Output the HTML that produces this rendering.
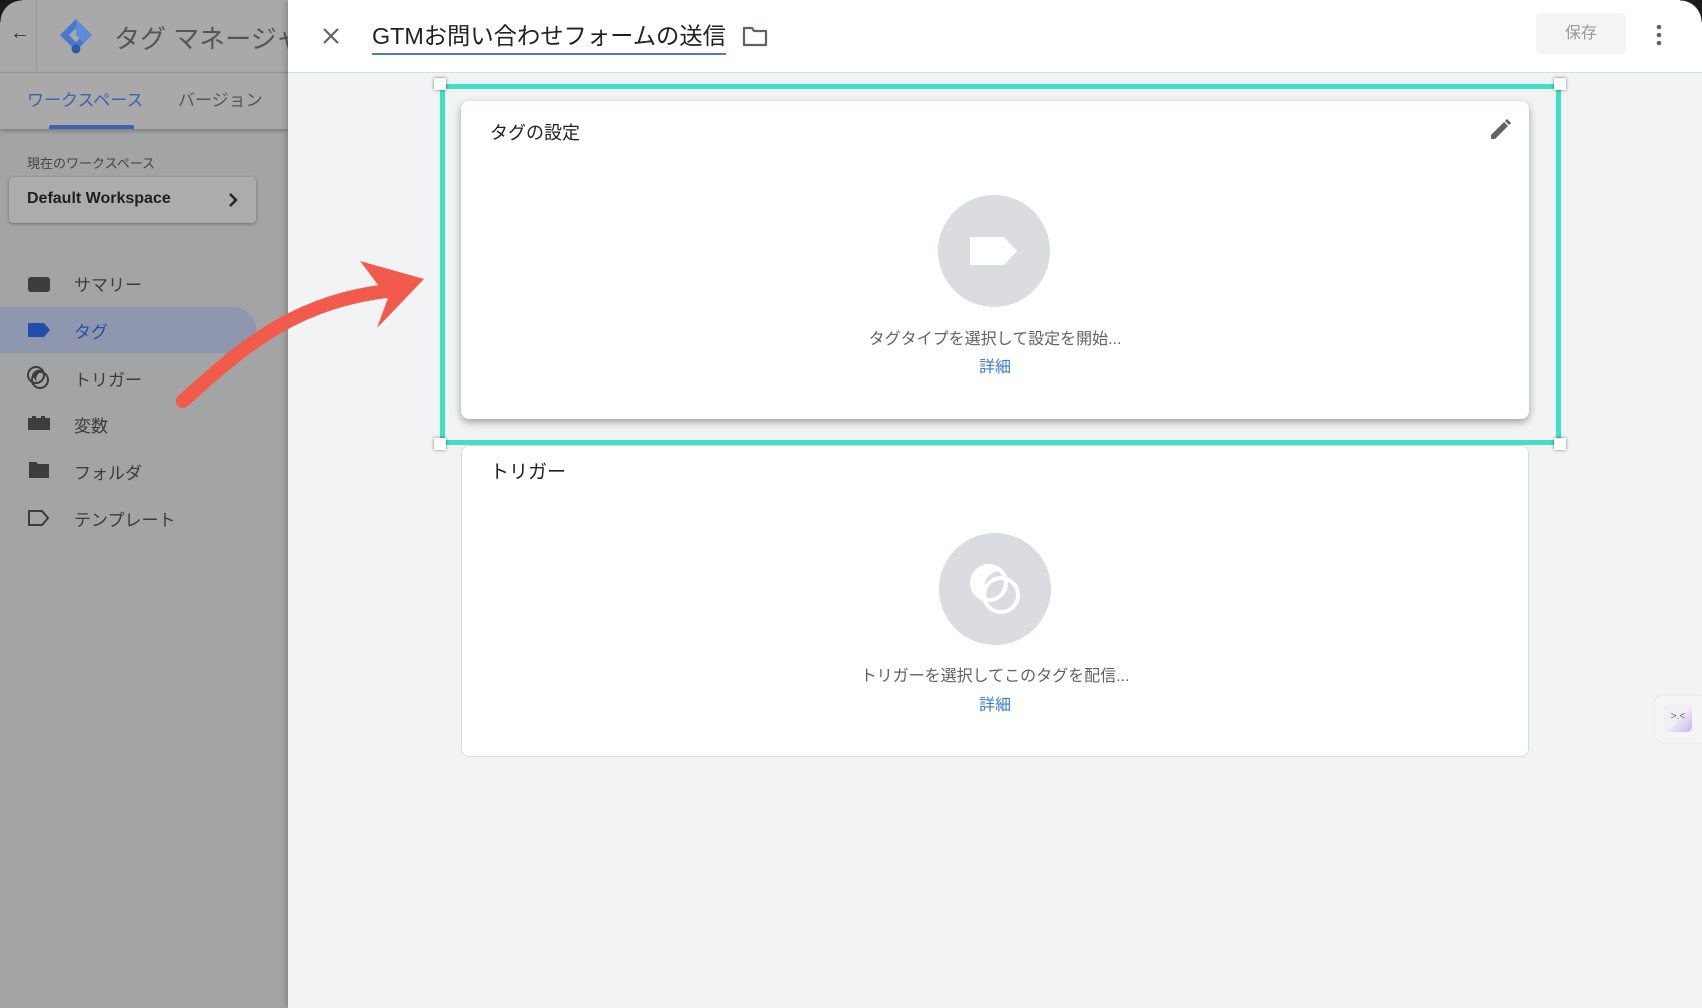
<!DOCTYPE html>
<html><head><meta charset="utf-8"><style>
*{margin:0;padding:0;box-sizing:border-box}
body{width:1702px;height:1008px;overflow:hidden;position:relative;background:#f1f3f4;font-family:"Liberation Sans","Noto Sans CJK JP",sans-serif}
.abs{position:absolute}
#side{left:0;top:0;width:288px;height:1008px;background:#a3a4a6}
#sidehead{left:0;top:0;width:288px;height:73px;background:#a9a9aa;border-bottom:1px solid #999}
#tabs{left:0;top:73px;width:288px;height:56px;background:#a9a9aa;box-shadow:0 2px 4px rgba(0,0,0,.25)}
.mi{position:absolute;left:74px;font-size:17px;color:#3c3c3e}
#panel{left:288px;top:0;width:1414px;height:1008px;background:#f1f3f4;box-shadow:-2px 0 6px rgba(0,0,0,.2)}
#head{left:288px;top:0;width:1414px;height:73px;background:#fff;border-bottom:1px solid #dadce0}
.card{position:absolute;left:461px;width:1068px;background:#fff;border-radius:8px}
.handle{position:absolute;width:12px;height:12px;background:#fff;box-shadow:0 0 3px rgba(0,0,0,.5)}
</style></head><body>
<div id="side" class="abs"></div>
<div id="sidehead" class="abs">
  <div class="abs" style="left:36px;top:0;width:1px;height:73px;background:#999"></div>
  <div class="abs" style="left:10px;top:22px;font-size:20px;color:#333">←</div>
  <svg class="abs" style="left:56px;top:16px" width="40" height="40" viewBox="0 0 40 40"><path d="M20 3 L36 19 L20 35 L4 19 Z" fill="#4a78c8"/><path d="M20 12 L27 19 L20 26 L13 19 Z" fill="#a9a9aa"/><path d="M20 3 L36 19 L28 27 L20 19Z" fill="#5e8ad6"/><circle cx="20" cy="33" r="4.5" fill="#2d5ab0"/></svg>
  <div class="abs" style="left:114px;top:19px;font-size:26px;color:#555;white-space:nowrap">タグ マネージャ</div>
</div>
<div id="tabs" class="abs">
  <div class="abs" style="left:27px;top:13px;font-size:17px;color:#3d63b0">ワークスペース</div>
  <div class="abs" style="left:178px;top:13px;font-size:17px;color:#555">バージョン</div>
  <div class="abs" style="left:49px;top:52px;width:85px;height:4px;background:#3d63b0;border-radius:2px 2px 0 0"></div>
</div>
<div class="abs" style="left:27px;top:153px;font-size:13px;color:#444">現在のワークスペース</div>
<div class="abs" style="left:9px;top:177px;width:247px;height:46px;background:#acacad;border-radius:4px;box-shadow:0 1px 3px rgba(0,0,0,.35)">
  <div class="abs" style="left:18px;top:13px;font-size:16px;color:#1f1f1f;font-weight:bold">Default Workspace</div>
  <svg class="abs" style="left:219px;top:15px" width="10" height="16"><path d="M2 2L8 8L2 14" fill="none" stroke="#222" stroke-width="2.4"/></svg>
</div>
<div class="abs" style="left:0;top:307px;width:256px;height:46px;background:#8e97ad;border-radius:0 23px 23px 0"></div>
<svg class="abs" style="left:27px;top:274px" width="24" height="20"><rect x="1" y="3" width="22" height="15" rx="3" fill="#3d3d3f"/></svg>
<div class="mi" style="top:271px">サマリー</div>
<svg class="abs" style="left:27px;top:322px" width="24" height="16"><path d="M1 1H17L23 8L17 15H1Z" fill="#1f4fa8"/></svg>
<div class="mi" style="top:318px;color:#1f4fa8">タグ</div>
<svg class="abs" style="left:26px;top:365px" width="26" height="26"><circle cx="10" cy="10" r="8" fill="none" stroke="#3d3d3f" stroke-width="2"/><circle cx="14" cy="15" r="8" fill="none" stroke="#3d3d3f" stroke-width="2"/><path d="M6 10a8 8 0 0 1 12 -4 8 8 0 0 0 -6 13z" fill="#3d3d3f"/></svg>
<div class="mi" style="top:366px">トリガー</div>
<svg class="abs" style="left:27px;top:415px" width="24" height="16"><path d="M1 3H5V1H9V3H14V1H18V3H23V15H1Z" fill="#3d3d3f"/></svg>
<div class="mi" style="top:412px">変数</div>
<svg class="abs" style="left:28px;top:461px" width="22" height="18"><path d="M1 1H8L10 3H21V17H1Z" fill="#3d3d3f"/></svg>
<div class="mi" style="top:459px">フォルダ</div>
<svg class="abs" style="left:27px;top:509px" width="24" height="18"><path d="M2 2H15L21 9L15 16H2Z" fill="none" stroke="#3d3d3f" stroke-width="2"/></svg>
<div class="mi" style="top:506px">テンプレート</div>

<div id="panel" class="abs"></div>
<div id="head" class="abs">
  <svg class="abs" style="left:33px;top:26px" width="20" height="20"><path d="M3 3L17 17M17 3L3 17" stroke="#5f6368" stroke-width="2.2"/></svg>
  <div class="abs" style="left:84px;top:17px;font-size:23.3px;color:#202124;white-space:nowrap">GTMお問い合わせフォームの送信</div>
  <div class="abs" style="left:84px;top:53px;width:354px;height:2px;background:#4a7bd0"></div>
  <svg class="abs" style="left:454px;top:25px" width="26" height="22"><path d="M2 3H10L12 6H24V20H2Z" fill="none" stroke="#5f6368" stroke-width="2.2" stroke-linejoin="round"/></svg>
  <div class="abs" style="left:1248px;top:13px;width:90px;height:41px;background:#f4f4f5;border-radius:5px;font-size:16px;color:#9a9a9a;text-align:center;line-height:41px">保存</div>
  <svg class="abs" style="left:1365px;top:24px" width="12" height="22"><circle cx="6" cy="3" r="2.3" fill="#5f6368"/><circle cx="6" cy="11" r="2.3" fill="#5f6368"/><circle cx="6" cy="19" r="2.3" fill="#5f6368"/></svg>
</div>

<div class="card" style="top:445px;height:312px;border:1px solid #dadce0">
  <div class="abs" style="left:28px;top:11px;font-size:19px;color:#202124">トリガー</div>
  <svg class="abs" style="left:477px;top:87px" width="112" height="112"><circle cx="56" cy="56" r="56" fill="#dadce0"/><circle cx="50" cy="50" r="17" fill="none" stroke="#fff" stroke-width="4"/><circle cx="62" cy="62" r="17" fill="none" stroke="#fff" stroke-width="4"/><path d="M33 50a17 17 0 0 1 29 -12 17 17 0 0 0 -12 29 17 17 0 0 1 -17 -17z" fill="#fff"/></svg>
  <div class="abs" style="left:0;width:100%;top:216px;text-align:center;font-size:16px;color:#5f6368">トリガーを選択してこのタグを配信...</div>
  <div class="abs" style="left:0;width:100%;top:245px;text-align:center;font-size:16px;color:#3d7bd8">詳細</div>
</div>

<div class="card" style="top:101px;height:318px;box-shadow:0 3px 8px rgba(0,0,0,.35)">
  <div class="abs" style="left:29px;top:18px;font-size:18px;color:#202124">タグの設定</div>
  <svg class="abs" style="left:1027px;top:17px" width="24" height="24"><path d="M3 21V17L16 4L20 8L7 21Z M17 3L19 1L23 5L21 7Z" fill="#5f6368"/></svg>
  <svg class="abs" style="left:477px;top:94px" width="112" height="112"><circle cx="56" cy="56" r="56" fill="#dadce0"/><path d="M32 42H66L79 56L66 70H32Z" fill="#fff"/></svg>
  <div class="abs" style="left:0;width:100%;top:224px;text-align:center;font-size:16px;color:#5f6368">タグタイプを選択して設定を開始...</div>
  <div class="abs" style="left:0;width:100%;top:252px;text-align:center;font-size:16px;color:#3d7bd8">詳細</div>
</div>

<div class="abs" style="left:440px;top:84px;width:1121px;height:361px;border:5px solid #40e0c4"></div>
<div class="handle" style="left:434px;top:78px"></div>
<div class="handle" style="left:1554px;top:78px"></div>
<div class="handle" style="left:434px;top:438px"></div>
<div class="handle" style="left:1554px;top:438px"></div>

<svg class="abs" style="left:0;top:0" width="500" height="500"><path d="M183 401 C250 340 300 300 395 290" fill="none" stroke="#f25a4c" stroke-width="14" stroke-linecap="round"/><path d="M360 261 L424 279 L377 328 L388 298 Z" fill="#f25a4c"/></svg>

<div class="abs" style="left:1655px;top:696px;width:47px;height:46px;background:#f4f5f7;border-radius:8px 0 0 8px;box-shadow:0 0 3px rgba(0,0,0,.08)"></div>
<div class="abs" style="left:1664px;top:704px;width:28px;height:28px;border-radius:5px;background:linear-gradient(135deg,#f0f0f4 50%,#c8b0e8);font-size:10px;color:#666;text-align:center;line-height:26px">&gt;.&lt;</div>

<div class="abs" style="left:0;top:0;width:22px;height:22px;background:radial-gradient(circle at 100% 100%,transparent 21px,#1a1a1a 22px)"></div>
<div class="abs" style="right:0;top:0;width:22px;height:22px;background:radial-gradient(circle at 0 100%,transparent 21px,#1a1a1a 22px)"></div>
</body></html>
